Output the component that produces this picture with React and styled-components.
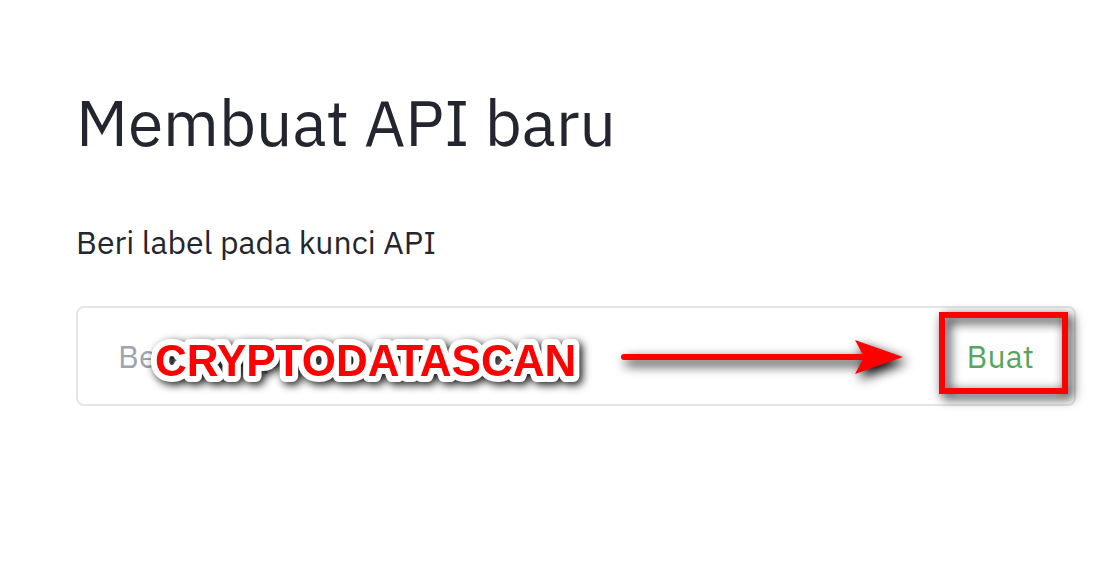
import React, { useState } from 'react';
import styled, { createGlobalStyle } from 'styled-components';

const GlobalStyle = createGlobalStyle`
  * {
    box-sizing: border-box;
  }

  body {
    margin: 0;
    background: #fff;
    color: #23262f;
    font-family: 'IBM Plex Sans', Roboto, sans-serif;
  }
`;

const Page = styled.main`
  padding: 82px 30px 82px 76px;
`;

const Title = styled.h1`
  margin: 0 0 56px;
  font-size: 64px;
  font-weight: 400;
  line-height: 80px;
`;

const Form = styled.form`
  display: flex;
  flex-direction: column;
  gap: 40px;
`;

const Label = styled.label`
  font-size: 32px;
  line-height: 48px;
`;

const Field = styled.div`
  position: relative;
  display: flex;
  height: 100px;
  border: 2px solid #e6e6e6;
  border-radius: 8px;
`;

const Input = styled.input`
  flex: 1;
  min-width: 0;
  padding: 0 0 0 40px;
  border: none;
  outline: none;
  background: transparent;
  color: inherit;
  font: inherit;
  font-size: 32px;

  &::placeholder {
    color: #a0a4b0;
    opacity: 1;
  }
`;

const Button = styled.button`
  padding: 0 40px;
  border: none;
  background: transparent;
  color: #58a65c;
  font: inherit;
  font-size: 32px;
  cursor: pointer;
`;

const Annotations = styled.div`
  position: absolute;
  inset: 0;
  display: flex;
  align-items: center;
  padding: 4px 6px 10px 77px;
  pointer-events: none;
`;

const Callout = styled.svg`
  width: 424px;
  height: 64px;
  padding-top: 16px;
  overflow: visible;
  filter: drop-shadow(3px 3px 4px rgba(0, 0, 0, 0.9));

  text {
    fill: #f00;
    stroke: #fff;
    stroke-width: 12px;
    stroke-linejoin: round;
    paint-order: stroke;
    font-family: 'Liberation Sans', Arial, sans-serif;
    font-size: 44px;
    font-weight: 700;
  }
`;

const Arrow = styled.div`
  flex: 1;
  display: flex;
  align-items: center;
  margin: 0 36px 0 42px;
  padding-top: 8px;
  filter: drop-shadow(4px 5px 6px #000);
`;

const Shaft = styled.div`
  flex: 1;
  height: 6px;
  margin-right: -10px;
  border-radius: 3px;
  background: #f00;
`;

const Head = styled.svg`
  width: 48px;
  height: 34px;
  fill: #f00;
`;

const Frame = styled.div`
  align-self: stretch;
  width: 129px;
  border: 6px solid #f00;
  filter: drop-shadow(4px 4px 6px #000);
`;

const App = () => {
  const [name, setName] = useState('');

  return (
    <Page>
      <GlobalStyle />
      <Title>Membuat API baru</Title>
      <Form onSubmit={e => e.preventDefault()}>
        <Label htmlFor="api-label">Beri label pada kunci API</Label>
        <Field>
          <Input
            id="api-label"
            type="text"
            placeholder="Beri label pada kunci API"
            value={name}
            onChange={e => setName(e.target.value)}
          />
          <Button type="submit">Buat</Button>
          <Annotations>
            <Callout>
              <text x="0" y="39">CRYPTODATASCAN</text>
            </Callout>
            <Arrow>
              <Shaft />
              <Head viewBox="0 0 48 34" aria-hidden="true">
                <path d="M0 0L48 17L0 34L9 17Z" />
              </Head>
            </Arrow>
            <Frame />
          </Annotations>
        </Field>
      </Form>
    </Page>
  );
};

export default App;
